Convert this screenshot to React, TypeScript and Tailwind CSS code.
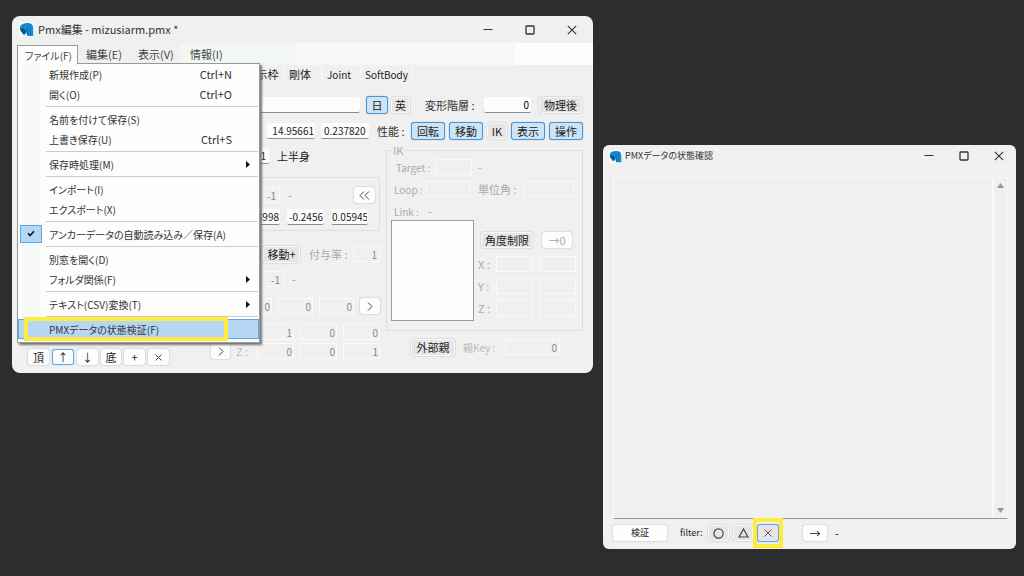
import React, { useState } from "react";

const gothic = "font-['Noto_Sans_CJK_JP',sans-serif]";

type MenuEntry = {
  label: string;
  shortcut?: string;
  submenu?: boolean;
  checked?: boolean;
  active?: boolean;
};

const fileMenu: MenuEntry[][] = [
  [
    { label: "新規作成(P)", shortcut: "Ctrl+N" },
    { label: "開く(O)", shortcut: "Ctrl+O" },
  ],
  [{ label: "名前を付けて保存(S)" }, { label: "上書き保存(U)", shortcut: "Ctrl+S" }],
  [{ label: "保存時処理(M)", submenu: true }],
  [{ label: "インポート(I)" }, { label: "エクスポート(X)" }],
  [{ label: "アンカーデータの自動読み込み／保存(A)", checked: true }],
  [{ label: "別窓を開く(D)" }, { label: "フォルダ関係(F)", submenu: true }],
  [{ label: "テキスト(CSV)変換(T)", submenu: true }],
  [{ label: "PMXデータの状態検証(F)", active: true }],
];

function AppIcon({ className }: { className: string }) {
  return (
    <svg viewBox="0 0 16 16" className={className} aria-hidden="true">
      <rect width="16" height="16" fill="#f8fafb" />
      <path
        d="M1 6C1 3.400 3.200 1.800 6 1.600 8 .8 12 1 13.600 2.400 14.800 3.200 15 5 15.200 8v7h-6.400l-1-4-1.200 2.200H4.400L3 11C1.600 9.800 1 8 1 6z"
        fill="#1590d6"
      />
      <path d="M1.400 6l2.800 1.200.8-1.400 1 2.600 1.600-1-.4 3.400-1 2.200H4.600L3.200 10.800C1.800 9.600 1.400 8 1.400 6z" fill="#12557f" />
      <path d="M11 2.400c1 2.600 1.300 6.400 1.200 12.200M8.400 4.200c.8 2.400 1.100 5.600 1 10" stroke="#0c62a0" strokeWidth="0.9" fill="none" />
      <path d="M3.200 4.600l4.200-2.200" stroke="#0c6fae" strokeWidth="0.8" />
    </svg>
  );
}

function CaptionButtons({ width }: { width: string }) {
  const cls = `flex h-full items-center justify-center ${width}`;
  return (
    <div className="flex h-full text-[#333]">
      <button aria-label="最小化" className={cls}>
        <svg width="10" height="10" viewBox="0 0 10 10" stroke="currentColor" fill="none">
          <path d="M0.500 4.500h9" />
        </svg>
      </button>
      <button aria-label="最大化" className={cls}>
        <svg width="10" height="10" viewBox="0 0 10 10" stroke="currentColor" strokeWidth="1.300" fill="none">
          <rect x="1" y="1" width="8" height="8" rx="0.800" />
        </svg>
      </button>
      <button aria-label="閉じる" className={cls}>
        <svg width="10" height="10" viewBox="0 0 10 10" stroke="currentColor" strokeWidth="1.100" fill="none">
          <path d="M0.800 0.800l8.400 8.400M9.200 0.800l-8.400 8.400" />
        </svg>
      </button>
    </div>
  );
}

function Field({
  label,
  value = "",
  className = "",
  disabled = false,
}: {
  label: string;
  value?: string;
  className?: string;
  disabled?: boolean;
}) {
  const look = disabled
    ? "border border-[#fafafa] bg-[#f0f0f0] text-[#898989]"
    : "rounded-xs border-b border-[#8c8c8c] bg-[#fdfdfd] text-[#222]";
  return (
    <input
      aria-label={label}
      defaultValue={value}
      disabled={disabled}
      className={`h-4 min-w-0 px-[3px] text-right text-[10px] leading-3 ${look} ${className}`}
    />
  );
}

function Btn({
  children,
  kind = "plain",
  className = "",
  ...rest
}: {
  kind?: "plain" | "white" | "on" | "focus";
} & React.ButtonHTMLAttributes<HTMLButtonElement>) {
  const kinds = {
    plain: "border-[#fafafa] bg-[#e6e6e6] text-[#222] shadow-[0_0_1px_1px_#dcdcdc]",
    white: "border-[#fdfdfd] bg-[#fdfdfd] text-[#222] shadow-[0_0_1px_1px_#dcdcdc]",
    on: "border-[#4f94cd] bg-[#cce4f7] text-[#222] shadow-[0_0_1px_#4f94cd]",
    focus: "border-[#5ba9ea] bg-[#fdfdfd] text-[#222] shadow-[0_0_1px_#5ba9ea]",
  };
  return (
    <button
      className={`flex shrink-0 items-center justify-center whitespace-nowrap rounded-[3px] border text-[11px] leading-3 ${kinds[kind]} ${className}`}
      {...rest}
    >
      {children}
    </button>
  );
}

function FileMenu() {
  return (
    <div
      role="menu"
      className="absolute left-0 top-full z-10 w-[243px] border border-[#999] bg-[#fdfdfd] pb-[3px] text-[11px] shadow-[2px_2px_2px_#777]"
    >
      <div className="absolute inset-y-0 left-1 w-[18px] bg-[#f4f8f7]" />
      {fileMenu.map((group, i) => (
        <div key={i} className="relative">
          {i > 0 && (
            <div className="ml-7 mr-px h-[5px] py-[2px]">
              <div className="h-px bg-[#ccc]" />
            </div>
          )}
          {group.map((item) => (
            <button
              key={item.label}
              role="menuitem"
              className={`relative flex h-5 w-full items-center pl-[31px] pr-[27px] text-[#333] ${
                item.active ? "bg-[#b5d7f3] outline-1 -outline-offset-1 outline-[#5aa9e6]" : ""
              }`}
            >
              {item.checked && (
                <span className="absolute left-0.5 top-px flex h-[18px] w-[22px] items-center justify-center border border-[#5aa9e6] bg-[#b5d7f3]">
                  <svg width="8" height="8" viewBox="0 0 8 8" fill="none" stroke="#111" strokeWidth="1.600">
                    <path d="M1 3.200l2 2.300L7 1.200" />
                  </svg>
                </span>
              )}
              <span className="whitespace-nowrap text-[10px] [font-feature-settings:'palt']">{item.label}</span>
              <span className="ml-auto">{item.shortcut}</span>
              {item.submenu && (
                <svg className="absolute right-[9px]" width="4" height="7" viewBox="0 0 4 7" fill="#111">
                  <path d="M0 0l4 3.500L0 7z" />
                </svg>
              )}
              {item.active && <span className="absolute -inset-y-0.5 left-[6px] w-[204px] border-4 border-[#ffec3d]" />}
            </button>
          ))}
        </div>
      ))}
    </div>
  );
}

function MenuBar() {
  const [open, setOpen] = useState(true);
  const item = "whitespace-nowrap text-left [font-feature-settings:'palt']";
  return (
    <nav className="flex h-[22px] pl-[5px] text-[11px] text-[#444]">
      <div className="relative mt-0.5 h-[18px] w-[61px]">
        <button
          onClick={() => setOpen(!open)}
          className={`relative z-20 h-[19px] w-full border border-b-0 border-[#999] bg-[#fdfdfd] pl-[7px] text-[10px] ${item}`}
        >
          ファイル(F)
        </button>
        {open && <FileMenu />}
      </div>
      <button className={`w-[52px] pl-2 ${item}`}>編集(E)</button>
      <button className={`w-[50px] pl-2 ${item}`}>表示(V)</button>
      <button className={`w-[110px] bg-[#f2f7f4] pl-[10px] ${item}`}>情報(I)</button>
      <div className="flex-1 bg-[#f7f7f6]" />
      <div className="w-[78px] bg-[#fdfdfd]" />
    </nav>
  );
}

function BoneColumn() {
  return (
    <div className="flex w-[169px] flex-col pt-1">
      <div className="flex h-4 items-center gap-2">
        <Field label="ボーン番号" value="1" className="w-[58px]" />
        <span className="text-[11px] text-[#222]">上半身</span>
      </div>

      <div className="mt-[13px] border border-[#dedede] pb-[5px] pt-[9px]">
        <div className="flex h-4 items-center">
          <Field label="表示先" value="-1" disabled className="w-[68px]" />
          <span className="ml-2 text-[11px] text-[#999]">-</span>
          <Btn kind="white" aria-label="戻す" className="ml-auto mr-1 h-4 w-[21px]">
            <svg width="11" height="9" viewBox="0 0 11 9" fill="none" stroke="#444">
              <path d="M5 0.500L1 4.500l4 4M10 0.500L6 4.500l4 4" />
            </svg>
          </Btn>
        </div>
        <div className="mt-1.5 flex h-4 items-center gap-[7px]">
          <Field label="オフセットX" value="8998" className="w-[68px] px-px" />
          <Field label="オフセットY" value="-0.2456" className="w-[37px] px-px" />
          <Field label="オフセットZ" value="0.05945" className="w-[37px] px-px text-left" />
        </div>
      </div>

      <div className="mt-[15px] flex h-4 items-center">
        <Btn className="ml-[52px] h-[17px] w-[37px]">移動+</Btn>
        <label htmlFor="rate" className="ml-[9px] whitespace-nowrap text-[11px] text-[#aaa]">
          付与率 :
        </label>
        <input
          id="rate"
          disabled
          defaultValue="1"
          className="ml-auto h-4 w-[27px] border border-[#fafafa] px-0.5 text-right text-[10px] text-[#898989]"
        />
      </div>

      <div className="mt-[9px] flex h-4 items-center">
        <Field label="付与親" value="-1" disabled className="w-[73px]" />
        <span className="ml-2 text-[11px] text-[#999]">-</span>
      </div>

      <div className="mt-[11px] flex h-4 items-center gap-[6px]">
        <Field label="軸X" value="0" disabled className="w-[61px] px-px" />
        <Field label="軸Y" value="0" disabled className="w-[35px] px-px" />
        <Field label="軸Z" value="0" disabled className="w-[35px] px-px" />
        <Btn kind="white" aria-label="軸計算" className="h-4 w-5">
          <svg width="6" height="9" viewBox="0 0 6 9" fill="none" stroke="#444">
            <path d="M1 0.500l4 4-4 4" />
          </svg>
        </Btn>
      </div>

      <div className="mt-[10px] flex h-4 items-center justify-end gap-[6px]">
        <Field label="ローカルX1" value="1" disabled className="w-[37px] px-px" />
        <Field label="ローカルX2" value="0" disabled className="w-[37px] px-px" />
        <Field label="ローカルX3" value="0" disabled className="w-[37px] px-px" />
      </div>
      <div className="mt-[3px] flex h-4 items-center gap-[6px]">
        <Btn kind="white" aria-label="ローカル軸計算" className="h-4 w-[19px]">
          <svg width="6" height="9" viewBox="0 0 6 9" fill="none" stroke="#444">
            <path d="M1 0.500l4 4-4 4" />
          </svg>
        </Btn>
        <span className="whitespace-nowrap text-[11px] text-[#bbb]">Z :</span>
        <Field label="ローカルZ1" value="0" disabled className="ml-auto w-[37px] px-px" />
        <Field label="ローカルZ2" value="0" disabled className="w-[37px] px-px" />
        <Field label="ローカルZ3" value="1" disabled className="w-[37px] px-px" />
      </div>
    </div>
  );
}

function IkColumn() {
  return (
    <div className="flex min-w-0 flex-1 flex-col">
      <fieldset className="border border-[#dedede] pb-[9px] pl-1 text-[10px] text-[#aaa]">
        <legend className="ml-px h-3 px-px text-[11px] leading-3">IK</legend>
        <div className="mt-[3px] flex h-4 items-center pl-[5px]">
          <span className="w-[39px] whitespace-nowrap">Target :</span>
          <Field label="Target" disabled className="w-[37px]" />
          <span className="ml-[6px] text-[11px]">-</span>
        </div>
        <div className="mt-1.5 flex h-4 items-center pl-[3px]">
          <span className="w-8 whitespace-nowrap">Loop :</span>
          <Field label="Loop" disabled className="w-[44px]" />
          <span className="ml-2 w-[46px] whitespace-nowrap text-[11px]">単位角 :</span>
          <Field label="単位角" disabled className="w-[50px]" />
        </div>
        <div className="mt-1.5 flex h-4 items-center pl-[3px]">
          <span className="w-[34px] whitespace-nowrap">Link :</span>
          <span className="text-[11px]">-</span>
        </div>
        <div className="mt-px flex">
          <select
            aria-label="Link"
            size={6}
            className="h-[101px] w-[83px] appearance-none rounded-none border border-[#9a9aa2] bg-[#fdfdfd]"
          />
          <div className="flex flex-col pl-1 pt-3">
            <div className="mb-2 flex items-center gap-[9px] pl-[3px]">
              <Btn className="h-4 w-[52px]">角度制限</Btn>
              <Btn kind="white" disabled className="h-4 w-[30px] text-[#aaa]!">
                →0
              </Btn>
            </div>
            {["X", "Y", "Z"].map((axis) => (
              <div key={axis} className="mb-1.5 flex h-4 items-center gap-[6px] last:mb-0">
                <span className="w-3 whitespace-nowrap text-[11px]">{axis} :</span>
                <Field label={`${axis} 下限`} disabled className="w-[37px]" />
                <Field label={`${axis} 上限`} disabled className="w-[37px]" />
              </div>
            ))}
          </div>
        </div>
      </fieldset>
      <div className="mt-[7px] flex h-[18px] items-center pl-[25px]">
        <Btn className="h-[17px] w-[44px]">外部親</Btn>
        <label htmlFor="parentKey" className="ml-2 w-[42px] whitespace-nowrap text-[10px] text-[#bbb]">
          親Key :
        </label>
        <input
          id="parentKey"
          disabled
          defaultValue="0"
          className="h-4 w-[55px] border border-[#fafafa] px-0.5 text-right text-[10px] text-[#898989]"
        />
      </div>
    </div>
  );
}

function EditorWindow() {
  return (
    <section className={`mt-4 flex-[581] rounded-lg bg-[#f0f0f0] ${gothic}`}>
      <header className="flex h-[27px] items-center pl-[7px]">
        <AppIcon className="size-[15px]" />
        <h1 className="ml-1 flex-1 whitespace-nowrap text-[11px] text-[#333]">Pmx編集 - mizusiarm.pmx *</h1>
        <CaptionButtons width="w-[42px]" />
      </header>
      <MenuBar />

      <div role="tablist" className="flex h-[19px] border-b border-[#f6f6f6] pl-[229px] pt-px text-[11px] text-[#222]">
        <button role="tab" className="w-[43px] whitespace-nowrap border-r border-[#f8f8f8] text-center">
          表示枠
        </button>
        <button role="tab" className="w-[38px] border-r border-[#f8f8f8] pl-[5px] text-left">
          剛体
        </button>
        <button role="tab" className="w-[39px] border-r border-[#f8f8f8] pl-[5px] text-left text-[10px]">
          Joint
        </button>
        <button role="tab" className="w-[52px] border-r border-[#f8f8f8] text-center text-[10px]">
          SoftBody
        </button>
      </div>

      <div className="flex pb-2 pr-[10px] pt-3">
        <div className="flex flex-1 items-end gap-[3px] pl-4">
          <Btn kind="white" className="h-4 w-[21px]">頂</Btn>
          <Btn kind="focus" className="h-4 w-[22px]">↑</Btn>
          <Btn kind="white" className="h-4 w-[21px]">↓</Btn>
          <Btn kind="white" className="h-4 w-[20px]">底</Btn>
          <Btn kind="white" className="h-4 w-[21px]">+</Btn>
          <Btn kind="white" aria-label="削除" className="h-4 w-[21px]">
            <svg width="7" height="7" viewBox="0 0 7 7" stroke="#444" fill="none">
              <path d="M0.500 0.500l6 6M6.500 0.500l-6 6" />
            </svg>
          </Btn>
        </div>

        <div className="w-[372px] pb-[6px]">
          <div className="flex h-[18px] items-center">
            <Field label="名前" className="flex-1" />
            <Btn kind="on" className="ml-[6px] h-[18px] w-[22px]">日</Btn>
            <Btn className="ml-[3px] h-4 w-[19px]">英</Btn>
            <label htmlFor="layer" className="ml-[15px] w-[59px] whitespace-nowrap text-[11px] text-[#333]">
              変形階層 :
            </label>
            <input
              id="layer"
              defaultValue="0"
              className="h-4 w-[47px] rounded-xs border-b border-[#8c8c8c] bg-[#fdfdfd] px-0.5 text-right text-[10px]"
            />
            <Btn className="ml-2 mr-px h-4 w-[43px]">物理後</Btn>
          </div>

          <div className="mt-2 flex h-[18px] items-center gap-1">
            <Field label="位置X" className="w-[50px]" />
            <Field label="位置Y" value="14.95661" className="ml-0.5 w-[48px] px-px" />
            <Field label="位置Z" value="0.2378204" className="ml-0.5 w-[48px] px-0 text-left" />
            <span className="ml-1 flex-1 whitespace-nowrap text-[11px] text-[#333]">性能 :</span>
            <Btn kind="on" className="h-[18px] w-[34px]">回転</Btn>
            <Btn kind="on" className="h-[18px] w-[34px]">移動</Btn>
            <Btn className="h-4 w-5">IK</Btn>
            <Btn kind="on" className="h-[18px] w-[34px]">表示</Btn>
            <Btn kind="on" className="h-[18px] w-[34px]">操作</Btn>
          </div>

          <div className="mt-1 flex gap-[6px]">
            <BoneColumn />
            <IkColumn />
          </div>
        </div>
      </div>
    </section>
  );
}

function CheckWindow() {
  return (
    <section className={`mb-[27px] mt-[145px] flex flex-[413] flex-col self-stretch rounded-md bg-[#f0f0f0] ${gothic}`}>
      <header className="flex h-[22px] items-center pl-[6px]">
        <AppIcon className="size-[13px]" />
        <h2 className="ml-[3px] flex-1 whitespace-nowrap text-[9px] text-[#333] [font-feature-settings:'palt']">
          PMXデータの状態確認
        </h2>
        <CaptionButtons width="w-[35px]" />
      </header>

      <div className="ml-[10px] mr-2 mt-[10px] flex flex-1 border border-b-[#999] border-l-[#fafafa] border-r-[#f6f6f6] border-t-[#fafafa]">
        <textarea aria-label="検証結果" readOnly className="flex-1 resize-none" />
        <div className="flex w-[15px] flex-col items-center justify-between border-l-2 border-[#fafafa] py-[5px]">
          <button aria-label="上へスクロール">
            <svg width="7" height="5" viewBox="0 0 7 5" fill="#999">
              <path d="M3.500 0L7 5H0z" />
            </svg>
          </button>
          <button aria-label="下へスクロール">
            <svg width="7" height="5" viewBox="0 0 7 5" fill="#999">
              <path d="M0 0h7L3.500 5z" />
            </svg>
          </button>
        </div>
      </div>

      <footer className="flex h-[30px] items-center pb-0.5 pl-[10px] text-[9px] text-[#222]">
        <Btn kind="white" className="h-4 w-[54px] text-[9px]!">検証</Btn>
        <span className="ml-[13px] w-7">filter:</span>
        <Btn aria-label="正常" className="h-4 w-[21px]">
          <svg width="11" height="11" viewBox="0 0 11 11" fill="none" stroke="#444" strokeWidth="1.200">
            <circle cx="5.500" cy="5.500" r="4.600" />
          </svg>
        </Btn>
        <Btn aria-label="注意" className="ml-1 h-4 w-[20px]">
          <svg width="11" height="10" viewBox="0 0 11 10" fill="none" stroke="#444" strokeWidth="1.200">
            <path d="M5.500 1l4.400 8H1.100z" />
          </svg>
        </Btn>
        <div className="relative ml-1">
          <Btn kind="focus" aria-label="エラー" className="h-[18px] w-[22px] bg-[#e6e6e6]!">
            <svg width="8" height="8" viewBox="0 0 8 8" fill="none" stroke="#555">
              <path d="M0.500 0.500l7 7M7.500 0.500l-7 7" />
            </svg>
          </Btn>
          <span className="pointer-events-none absolute -inset-x-1 -inset-y-1.5 border-4 border-[#ffec3d]" />
        </div>
        <Btn kind="white" className="ml-6 h-4 w-6">→</Btn>
        <span className="ml-2 text-[11px]">-</span>
      </footer>
    </section>
  );
}

export default function App() {
  return (
    <main className="flex min-h-screen items-start gap-[10px] bg-[#2d2d2d] pl-3 pr-2">
      <EditorWindow />
      <CheckWindow />
    </main>
  );
}
